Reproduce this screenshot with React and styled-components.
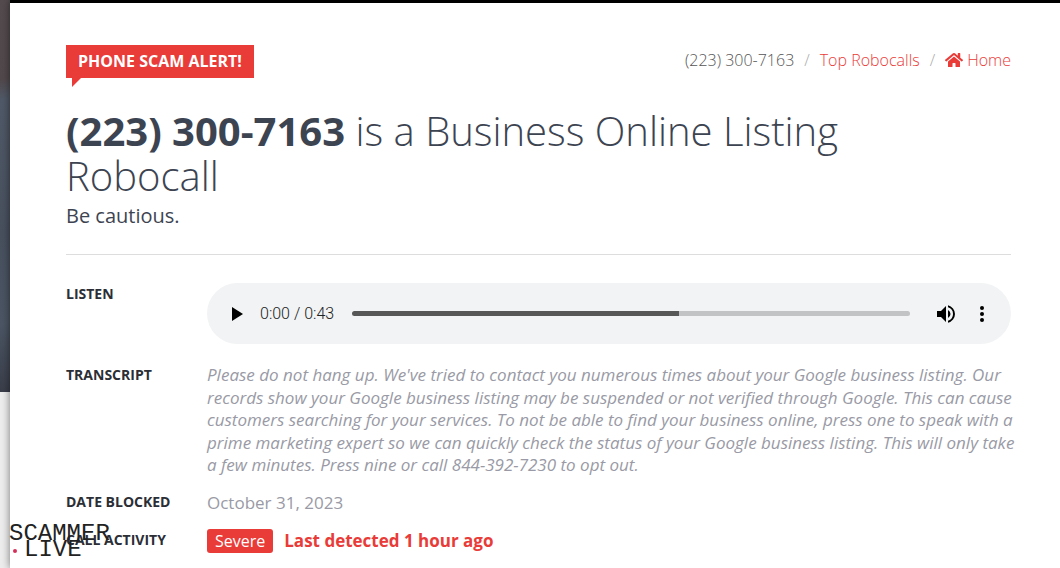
import React, { useState } from 'react';
import styled, { createGlobalStyle } from 'styled-components';
import { FaHome } from 'react-icons/fa';

const red = '#e93b38';
const slate = '#3d4451';

const GlobalStyle = createGlobalStyle`
  *, *::before, *::after { box-sizing: border-box; }
  body {
    margin: 0;
    background: #ededed;
    color: #555;
    font-family: 'Open Sans', 'Noto Sans', sans-serif;
    font-size: 16px;
    line-height: 24px;
  }
`;

const Page = styled.div`
  position: relative;
  min-height: 100vh;
  padding-left: 10px;
  overflow: hidden;
  background: linear-gradient(170deg, #544b4e 0, #51484b 78px, #505967 98px, #48505e 230px, #4b5563 320px, #383c48 390px) 0 0 / 100% 392px no-repeat;
`;

const Sheet = styled.main`
  min-height: 100vh;
  padding: 42px 49px 0 56px;
  border-top: 3px solid #000;
  background: #fff;
  box-shadow: 0 0 8px rgba(0, 0, 0, 0.5);
`;

const TopBar = styled.div`
  display: flex;
  justify-content: space-between;
  align-items: flex-start;
`;

const Alert = styled.strong`
  position: relative;
  padding: 4px 12px 5px;
  background: ${red};
  color: #fff;
  font-weight: 700;

  &::after {
    content: '';
    position: absolute;
    top: 100%;
    left: 6px;
    border-top: 9px solid ${red};
    border-right: 9px solid transparent;
  }
`;

const Crumbs = styled.ol`
  display: flex;
  margin: 0;
  padding: 3px 0 0;
  list-style: none;
  font-weight: 300;
`;

const Crumb = styled.li`
  & + &::before {
    content: '/';
    padding: 0 10px;
    color: #aaa;
  }
`;

const CrumbLink = styled.a`
  color: ${red};
  text-decoration: none;

  svg {
    width: 18px;
    height: 16px;
    margin-right: 4px;
    vertical-align: -2px;
  }
`;

const Heading = styled.header`
  padding: 30px 0 25px;
  border-bottom: 1px solid #ddd;
  color: ${slate};
`;

const Title = styled.h1`
  margin: 0;
  padding-right: 56px;
  font-size: 40px;
  line-height: 45px;
  font-weight: 300;

  strong { font-weight: 700; }
`;

const Subtitle = styled.p`
  margin: 5px 0 0;
  font-size: 20px;
  line-height: 26px;
`;

const Details = styled.dl`
  display: grid;
  grid-template-columns: 141px 1fr;
  row-gap: 14px;
  margin: 28px 0 0;
`;

const Term = styled.dt`
  color: #2b2e35;
  font-size: 14px;
  line-height: 22px;
  font-weight: 700;
`;

const Detail = styled.dd`
  margin: 0;
  color: #999aa5;
  font-size: 17px;
  line-height: 24px;
`;

const Transcript = styled.p`
  margin: 0 -8px 0 0;
  line-height: 1.33;
  font-style: italic;
`;

const Player = styled.div`
  display: flex;
  align-items: center;
  height: 61px;
  margin-bottom: 6px;
  padding: 0 17px 0 18px;
  border-radius: 31px;
  background: #f1f3f4;
`;

const IconButton = styled.button`
  display: grid;
  place-items: center;
  width: 24px;
  height: 24px;
  padding: 0;
  border: 0;
  background: none;
  color: #000;
  margin-left: ${(p) => (p.$spaced ? '12px' : '0')};

  svg {
    width: 24px;
    height: 24px;
    fill: currentColor;
  }
`;

const Time = styled.span`
  padding: 0 18px 0 11px;
  color: #222;
  font-family: 'Roboto', sans-serif;
  font-size: 16px;
  font-weight: 300;
`;

const Seek = styled.input`
  flex: 1;
  min-width: 0;
  height: 5px;
  margin: 0 24px 0 0;
  border-radius: 3px;
  appearance: none;
  background: linear-gradient(#575757, #575757) 0 0 / ${(p) => p.$buffered}% 100% no-repeat #c2c3c4;

  &::-webkit-slider-thumb {
    appearance: none;
    width: 1px;
    height: 5px;
    background: transparent;
  }
`;

const Activity = styled.div`
  display: flex;
  align-items: center;
  gap: 11px;
`;

const Level = styled.span`
  padding: 0 8px;
  border-radius: 3px;
  background: ${red};
  color: #fff;
  font-size: 16px;
`;

const Detected = styled.strong`
  color: ${red};
  font-weight: 700;
`;

const Watermark = styled.div`
  position: absolute;
  left: 9px;
  top: 526px;
  color: #222;
  font-family: 'Liberation Mono', monospace;
  font-size: 24px;
  line-height: 16px;
  white-space: pre;
  pointer-events: none;

  div { display: flex; align-items: center; }
`;

const Dot = styled.i`
  width: 4px;
  height: 4px;
  margin: 2px 7px 0 4px;
  border-radius: 50%;
  background: #d5305a;
`;

function AudioPlayer() {
  const [time, setTime] = useState(0);
  return (
    <Player role="group" aria-label="Call recording">
      <IconButton type="button" aria-label="Play">
        <svg viewBox="0 0 24 24"><path d="M7 5v14l11-7z" /></svg>
      </IconButton>
      <Time>0:{String(time).padStart(2, '0')} / 0:43</Time>
      <Seek
        type="range"
        min="0"
        max="43"
        value={time}
        $buffered={58.6}
        aria-label="Seek"
        onChange={(e) => setTime(Number(e.target.value))}
      />
      <IconButton type="button" aria-label="Mute">
        <svg viewBox="0 0 24 24">
          <path d="M3 9v6h4l5 5V4L7 9H3zm13.5 3A4.5 4.5 0 0 0 14 7.97v8.05A4.5 4.5 0 0 0 16.5 12zM14 3.23v2.06a7 7 0 0 1 0 13.42v2.06a9 9 0 0 0 0-17.54z" />
        </svg>
      </IconButton>
      <IconButton type="button" aria-label="More options" $spaced>
        <svg viewBox="0 0 24 24">
          <circle cx="12" cy="6" r="2" />
          <circle cx="12" cy="12" r="2" />
          <circle cx="12" cy="18" r="2" />
        </svg>
      </IconButton>
    </Player>
  );
}

export default function App() {
  return (
    <Page>
      <GlobalStyle />
      <Sheet>
        <TopBar>
          <Alert>PHONE SCAM ALERT!</Alert>
          <nav aria-label="Breadcrumb">
            <Crumbs>
              <Crumb>(223) 300-7163</Crumb>
              <Crumb><CrumbLink href="#robocalls">Top Robocalls</CrumbLink></Crumb>
              <Crumb><CrumbLink href="#home"><FaHome />Home</CrumbLink></Crumb>
            </Crumbs>
          </nav>
        </TopBar>
        <Heading>
          <Title><strong>(223) 300-7163</strong> is a Business Online Listing Robocall</Title>
          <Subtitle>Be cautious.</Subtitle>
        </Heading>
        <Details>
          <Term>LISTEN</Term>
          <Detail><AudioPlayer /></Detail>
          <Term>TRANSCRIPT</Term>
          <Detail>
            <Transcript>
              Please do not hang up. We've tried to contact you numerous times about your Google business
              listing. Our records show your Google business listing may be suspended or not verified through
              Google. This can cause customers searching for your services. To not be able to find your
              business online, press one to speak with a prime marketing expert so we can quickly check the
              status of your Google business listing. This will only take a few minutes. Press nine or call
              844-392-7230 to opt out.
            </Transcript>
          </Detail>
          <Term>DATE BLOCKED</Term>
          <Detail>October 31, 2023</Detail>
          <Term>CALL ACTIVITY</Term>
          <Detail>
            <Activity>
              <Level>Severe</Level>
              <Detected>Last detected 1 hour ago</Detected>
            </Activity>
          </Detail>
        </Details>
      </Sheet>
      <Watermark>
        <div>SCAMMER</div>
        <div><Dot />LIVE</div>
      </Watermark>
    </Page>
  );
}
